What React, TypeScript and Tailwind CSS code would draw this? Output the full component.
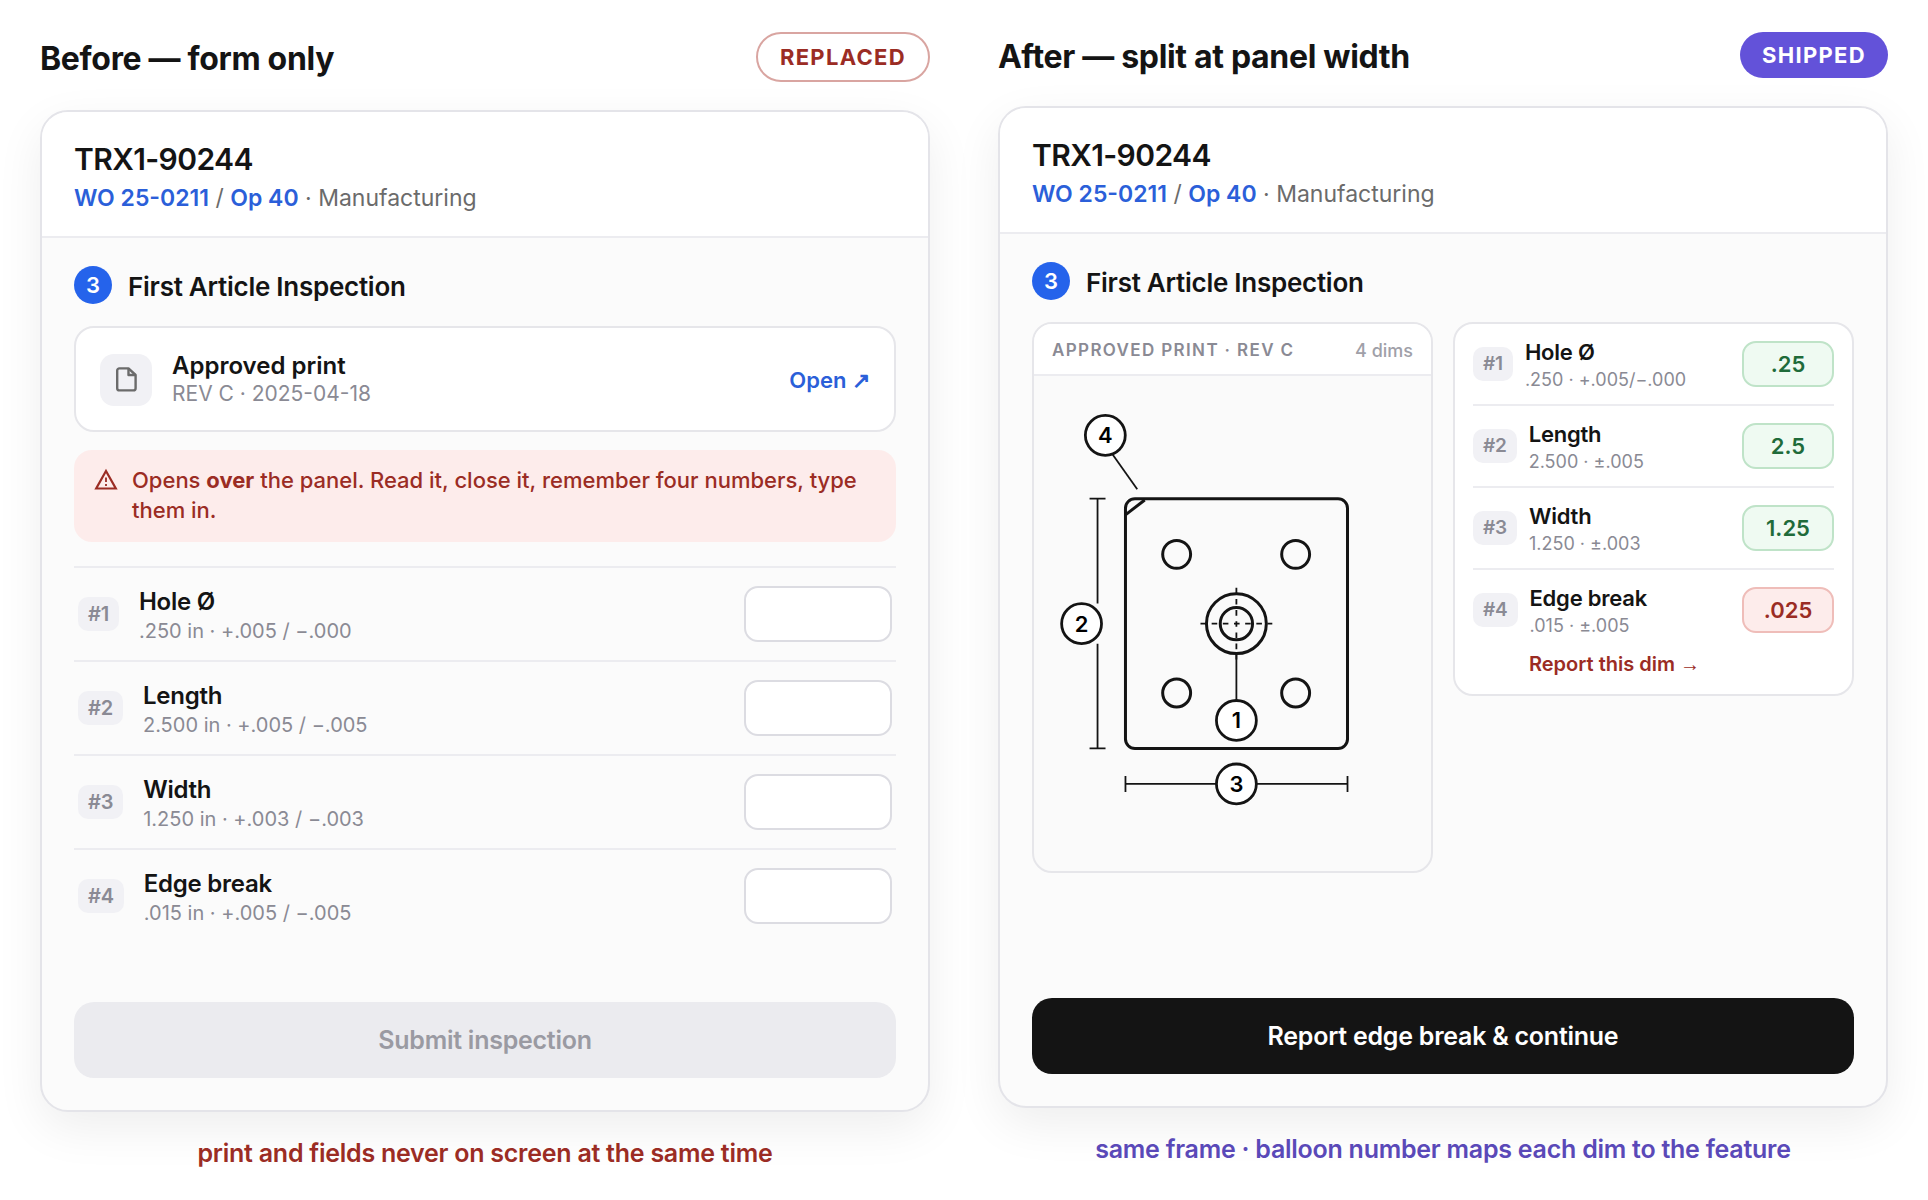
import React from 'react';

type Dim = {
  id: number;
  name: string;
  spec: string;
  value?: string;
  ok?: boolean;
};

const formDims: Dim[] = [
  { id: 1, name: 'Hole Ø', spec: '.250 in · +.005 / −.000' },
  { id: 2, name: 'Length', spec: '2.500 in · +.005 / −.005' },
  { id: 3, name: 'Width', spec: '1.250 in · +.003 / −.003' },
  { id: 4, name: 'Edge break', spec: '.015 in · +.005 / −.005' },
];

const splitDims: Dim[] = [
  { id: 1, name: 'Hole Ø', spec: '.250 · +.005/−.000', value: '.25', ok: true },
  { id: 2, name: 'Length', spec: '2.500 · ±.005', value: '2.5', ok: true },
  { id: 3, name: 'Width', spec: '1.250 · ±.003', value: '1.25', ok: true },
  { id: 4, name: 'Edge break', spec: '.015 · ±.005', value: '.025', ok: false },
];

const holes = [
  [143, 178.8],
  [262.3, 178.8],
  [143, 317.8],
  [262.3, 317.8],
];

const balloons = [
  { n: 4, x: 71.5, y: 59.5 },
  { n: 2, x: 47.7, y: 248.3 },
  { n: 1, x: 202.9, y: 345.3 },
  { n: 3, x: 202.9, y: 409 },
];

function Panel({ children, action }: { children: React.ReactNode; action: React.ReactNode }) {
  return (
    <section className="flex flex-col min-h-[1002px] mt-7 rounded-[28px] border-2 border-[#e4e4e9] bg-[#fbfbfb] overflow-hidden shadow-[0_16px_48px_rgba(0,0,0,0.07)]">
      <header className="px-8 pt-[29px] pb-[21px] bg-white border-b-2 border-[#ececf0]">
        <h3 className="text-[30px] leading-9 font-semibold tracking-[-0.02em]">TRX1-90244</h3>
        <p className="mt-1 text-[23px] leading-[34px] text-[#6b6b6b]">
          <a href="#wo" className="font-semibold text-[#2b5fd9]">WO 25-0211</a> /{' '}
          <a href="#op" className="font-semibold text-[#2b5fd9]">Op 40</a> · Manufacturing
        </p>
      </header>
      <div className="flex flex-col flex-1 px-8 pt-7 pb-8">
        <div className="flex items-center gap-4 mb-[22px]">
          <span className="flex items-center justify-center size-[38px] rounded-full bg-[#2563eb] text-white text-[22px] font-semibold">
            3
          </span>
          <h4 className="pt-[3px] text-[26px] leading-8 font-semibold tracking-[-0.01em]">First Article Inspection</h4>
        </div>
        {children}
        <div className="mt-auto">{action}</div>
      </div>
    </section>
  );
}

function FileIcon() {
  return (
    <svg width="24" height="28" viewBox="0 0 24 28" fill="none" stroke="#6b6b6b" strokeWidth="2.4" strokeLinejoin="round">
      <path d="M14.5 2.4 H5.4 a2.2 2.2 0 0 0 -2.2 2.2 V22.2 A2.2 2.2 0 0 0 5.4 24.4 H19.4 a2.2 2.2 0 0 0 2.2 -2.2 V9 Z" />
      <path d="M14.5 2.4 V9 H21.6" />
    </svg>
  );
}

function WarningIcon() {
  return (
    <svg width="24" height="24" viewBox="0 0 24 24" fill="none" stroke="#9b2c24" strokeWidth="2.2" className="shrink-0 mt-0.5">
      <path d="M12 4 L21.8 21.5 H2.2 Z" />
      <path d="M12 10.5 V15 M12 17 V19" strokeWidth="1.8" />
    </svg>
  );
}

function PrintDrawing() {
  return (
    <svg viewBox="0 0 398 496" className="block w-full" fill="none" stroke="#141414" role="img" aria-label="Approved print">
      <g strokeWidth="3">
        <rect x="91.7" y="123" width="222.6" height="250.4" rx="9.5" />
        <path d="M92 139 L111 124.3" />
        {holes.map(([x, y]) => (
          <circle key={`${x}-${y}`} cx={x} cy={y} r="14" />
        ))}
        <circle cx="202.9" cy="248.3" r="30" />
        <circle cx="202.9" cy="248.3" r="16.2" />
      </g>
      <g strokeWidth="1.8">
        <path d="M166.9 248.3 H238.9 M202.9 212.3 V284.3" strokeDasharray="5.6 5.6" />
        <path d="M202.9 278 V325" />
        <path d="M79 79 L103.5 113.5" />
        <path d="M63.7 123 V228 M63.7 268.5 V373.4 M55.7 123 H71.7 M55.7 373.4 H71.7" />
        <path d="M91.7 409 H314.3 M91.7 401 V417 M314.3 401 V417" />
      </g>
      {balloons.map((b) => (
        <g key={b.n}>
          <circle cx={b.x} cy={b.y} r="20" fill="#fff" strokeWidth="2.8" />
          <text x={b.x} y={b.y + 8} textAnchor="middle" fill="#000" stroke="none" className="text-[22px] font-semibold">
            {b.n}
          </text>
        </g>
      ))}
    </svg>
  );
}

export default function App() {
  return (
    <main className="grid grid-cols-2 gap-x-[68px] px-10 py-8 min-h-screen bg-white text-[#141414] font-[Inter,sans-serif]">
      {/* Before */}
      <div>
        <div className="flex items-center justify-between">
          <h2 className="pt-1 text-[32px] leading-10 font-bold tracking-[-0.01em]">Before — form only</h2>
          <span className="px-[22px] py-[9px] rounded-full border-2 border-[#d9a5a1] text-[22px] leading-7 font-bold tracking-[0.06em] text-[#9b2c24]">
            REPLACED
          </span>
        </div>
        <Panel
          action={
            <button disabled className="w-full h-[76px] pt-0.5 rounded-[20px] bg-[#ebebef] text-[25px] font-semibold tracking-[-0.01em] text-[#9a9aa2]">
              Submit inspection
            </button>
          }
        >
          <div className="flex items-center gap-5 px-6 pt-6 pb-[22px] rounded-[20px] border-2 border-[#e6e6ea] bg-white">
            <span className="flex items-center justify-center size-[52px] rounded-[14px] bg-[#f1f1f5]">
              <FileIcon />
            </span>
            <div className="flex-1">
              <div className="text-2xl leading-7 font-semibold">Approved print</div>
              <div className="text-[21px] leading-7 text-[#8a8a94]">REV C · 2025-04-18</div>
            </div>
            <a href="#print" className="text-[22px] font-semibold text-[#2b5fd9]">
              Open <span className="font-['Liberation_Sans',sans-serif] font-bold">↗</span>
            </a>
          </div>
          <div className="flex gap-3.5 mt-[18px] px-5 pt-[15px] pb-[17px] rounded-[18px] bg-[#fdeceb] text-[22px] leading-[30px] font-medium text-[#9b2c24]">
            <WarningIcon />
            <p>
              Opens <b>over</b> the panel. Read it, close it, remember four numbers, type them in.
            </p>
          </div>
          <div className="mt-6">
            {formDims.map((d) => (
              <div key={d.id} className="flex items-center gap-5 px-1 h-[94px] border-t-2 border-[#ececf0]">
                <span className="px-2.5 rounded-[10px] bg-[#f1f1f5] text-xl leading-[34px] font-semibold tracking-[-0.01em] text-[#8a8a94]">
                  #{d.id}
                </span>
                <label htmlFor={`dim-${d.id}`} className="flex-1 pt-1">
                  <span className="block text-2xl leading-[30px] font-semibold tracking-[-0.01em]">{d.name}</span>
                  <span className="block text-xl leading-7 text-[#8a8a94]">{d.spec}</span>
                </label>
                <input
                  id={`dim-${d.id}`}
                  className="w-[148px] h-14 px-4 rounded-[14px] border-2 border-[#dcdce2] bg-white text-[22px]"
                />
              </div>
            ))}
          </div>
        </Panel>
        <p className="mt-[25px] text-center text-[25px] leading-8 font-semibold tracking-[-0.01em] text-[#9b2c24]">
          print and fields never on screen at the same time
        </p>
      </div>

      {/* After */}
      <div>
        <div className="flex items-center justify-between">
          <h2 className="pt-1 text-[32px] leading-10 font-bold tracking-[-0.01em]">After — split at panel width</h2>
          <span className="px-[22px] py-[9px] rounded-full bg-[#6352d9] text-[22px] leading-7 font-bold tracking-[0.06em] text-white">
            SHIPPED
          </span>
        </div>
        <Panel
          action={
            <button className="w-full h-[76px] pt-0.5 rounded-[20px] bg-[#141414] text-[25px] font-semibold tracking-[-0.01em] text-white">
              Report edge break & continue
            </button>
          }
        >
          <div className="grid grid-cols-2 gap-5 items-start">
            <div className="rounded-[20px] border-2 border-[#e6e6ea] bg-[#fafafa] overflow-hidden">
              <div className="flex items-center justify-between px-[18px] pt-1 h-[52px] bg-white border-b-2 border-[#ececf0]">
                <span className="text-[17px] font-semibold tracking-[0.08em] text-[#8a8a94]">APPROVED PRINT · REV C</span>
                <span className="text-lg font-medium text-[#a0a0a8]">4 dims</span>
              </div>
              <PrintDrawing />
            </div>
            <div className="px-[18px] rounded-[20px] border-2 border-[#e6e6ea] bg-white">
              {splitDims.map((d) => (
                <div key={d.id} className="flex items-center gap-3 py-2.5 border-t-2 border-[#ececf0] first:border-t-0">
                  <span className="px-2.5 rounded-[10px] bg-[#f1f1f5] text-[19px] leading-[34px] font-semibold tracking-[-0.01em] text-[#8a8a94]">
                    #{d.id}
                  </span>
                  <label htmlFor={`reading-${d.id}`} className="flex-1 pt-1">
                    <span className="block text-[22px] leading-7 font-semibold tracking-[-0.01em]">{d.name}</span>
                    <span className="block text-lg leading-7 text-[#8a8a94]">{d.spec}</span>
                  </label>
                  <input
                    id={`reading-${d.id}`}
                    defaultValue={d.value}
                    className={
                      'w-[92px] h-[46px] rounded-[14px] border-2 text-center text-[22px] font-semibold ' +
                      (d.ok ? 'border-[#bfe3c8] bg-[#effaf2] text-[#1f6b3a]' : 'border-[#efbdb9] bg-[#fdeceb] text-[#9b2c24]')
                    }
                  />
                </div>
              ))}
              <a href="#report" className="block pl-14 pb-4 text-xl leading-7 font-semibold text-[#9b2c24]">
                Report this dim <span className="font-['Liberation_Sans',sans-serif]">→</span>
              </a>
            </div>
          </div>
        </Panel>
        <p className="mt-[25px] text-center text-[25px] leading-8 font-semibold tracking-[-0.01em] text-[#5a49b8]">
          same frame · balloon number maps each dim to the feature
        </p>
      </div>
    </main>
  );
}
